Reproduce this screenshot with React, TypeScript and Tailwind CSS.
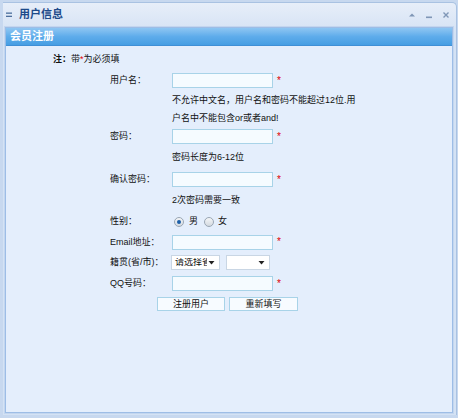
import React from "react";

const font = { fontFamily: '"Liberation Sans", "Noto Sans CJK SC", sans-serif' };

function Star() {
  return <span className="ml-[4px] text-[10px] leading-none text-[#e00000]">*</span>;
}

function TextBox() {
  return <div className="h-[15px] w-[101px] border border-[#a8d3e8] bg-[#f5fbff]" />;
}

function Row({ label, h, children }: { label?: string; h: number; children?: React.ReactNode }) {
  return (
    <div className="flex items-center" style={{ height: h }}>
      <div className="w-[62px] shrink-0 text-[9px] leading-none text-[#111]">{label}</div>
      <div className="flex items-center">{children}</div>
    </div>
  );
}

function Radio({ checked }: { checked?: boolean }) {
  return (
    <span className="flex h-[10px] w-[10px] items-center justify-center rounded-full border border-[#9aa6b4] bg-gradient-to-b from-[#f4f6f8] to-[#d3d9e0]">
      {checked && <span className="h-[4px] w-[4px] rounded-full bg-[#1c5fa8]" />}
    </span>
  );
}

function FakeSelect({ w, text }: { w: number; text?: string }) {
  return (
    <div className="flex h-[15px] items-center overflow-hidden border border-[#c9d6e4] bg-white" style={{ width: w }}>
      <div className="min-w-0 flex-1 overflow-hidden whitespace-nowrap pl-[3px] text-[9px] leading-none text-[#111]">{text}</div>
      <svg width="9" height="9" viewBox="0 0 9 9" className="mr-[3px] shrink-0">
        <path d="M1.5 3 L7.5 3 L4.5 6.5 Z" fill="#222" />
      </svg>
    </div>
  );
}

export default function App() {
  return (
    <div className="relative h-[418px] w-[458px] overflow-hidden bg-[#c7d8ef]" style={font}>
      {/* window */}
      <div className="ml-[3px] mt-[2px] h-[413px] w-[454px] rounded-tr-[5px] border-t border-r border-[#a9c2e2] bg-gradient-to-b from-[#e7eef9] to-[#d4e2f4] to-[30px]">
        {/* title bar */}
        <div className="flex h-[23px] items-center">
          <svg width="8" height="6" viewBox="0 0 8 6" className="ml-[3px]">
            <rect x="0" y="0.5" width="6" height="1.3" fill="#4d6f9c" />
            <rect x="0" y="3.7" width="6" height="1.3" fill="#4d6f9c" />
          </svg>
          <span className="ml-[5px] text-[11px] font-bold leading-none text-[#1d4a8a]">用户信息</span>
          <div className="ml-auto mr-[6px] flex items-center gap-[9px]">
            <svg width="8" height="8" viewBox="0 0 8 8">
              <path d="M1 5.5 L4 2.5 L7 5.5 Z" fill="#7f96b6" />
            </svg>
            <svg width="8" height="8" viewBox="0 0 8 8">
              <rect x="1" y="5.5" width="6" height="1.6" fill="#7f96b6" />
            </svg>
            <svg width="8" height="8" viewBox="0 0 8 8">
              <path d="M1.5 1.5 L6.5 6.5 M6.5 1.5 L1.5 6.5" stroke="#7f96b6" strokeWidth="1.4" />
            </svg>
          </div>
        </div>
        {/* panel */}
        <div className="ml-[2px] mt-[1px] flex h-[386px] w-[448px] flex-col border border-[#9dbde6] bg-[#e4eefc] shadow-[0_0_0_1px_#c3d6ef]">
          <div className="flex h-[18px] items-center border-b border-[#3f8fd6] bg-gradient-to-b from-[#8ec6f2] via-[#5eaceb] to-[#469ee3] pl-[4px]">
            <span className="text-[11px] font-bold leading-none text-white">会员注册</span>
          </div>
          <div className="flex-1 pt-[3px]">
            <div className="flex h-[20px] items-center pl-[47px] text-[9px] leading-none text-[#111]">
              <span className="font-bold">注：</span>
              <span>带</span>
              <span className="text-[#e00000]">*</span>
              <span>为必须填</span>
            </div>
            <div className="mt-[1px] pl-[104px]">
              <Row label="用户名：" h={21}>
                <TextBox />
                <Star />
              </Row>
              <div className="ml-[62px] whitespace-nowrap text-[9px] leading-[18px] text-[#111]" style={{ height: 36 }}>
                不允许中文名，用户名和密码不能超过12位.用
                <br />
                户名中不能包含or或者and!
              </div>
              <Row label="密码：" h={19}>
                <TextBox />
                <Star />
              </Row>
              <Row h={23}>
                <span className="text-[9px] leading-none text-[#111]">密码长度为6-12位</span>
              </Row>
              <Row label="确认密码：" h={21}>
                <TextBox />
                <Star />
              </Row>
              <Row h={21}>
                <span className="text-[9px] leading-none text-[#111]">2次密码需要一致</span>
              </Row>
              <Row label="性别：" h={21}>
                <div className="flex items-center pl-[2px] text-[9px] leading-none text-[#111]">
                  <Radio checked />
                  <span className="ml-[5px]">男</span>
                  <span className="ml-[6px]">
                    <Radio />
                  </span>
                  <span className="ml-[4px]">女</span>
                </div>
              </Row>
              <Row label="Email地址：" h={20}>
                <TextBox />
                <Star />
              </Row>
              <Row label="籍贯(省/市)：" h={21}>
                <div className="-ml-[1px] flex items-center gap-[6px]">
                  <FakeSelect w={49} text="请选择省份" />
                  <FakeSelect w={44} />
                </div>
              </Row>
              <Row label="QQ号码：" h={21}>
                <TextBox />
                <Star />
              </Row>
              <div className="flex h-[20px] items-center gap-[4px] pl-[47px]">
                <button className="h-[14px] w-[68px] border border-[#a8d3e8] bg-[#f7fbff] text-[9px] leading-none text-[#111]">
                  注册用户
                </button>
                <button className="h-[14px] w-[69px] border border-[#a8d3e8] bg-[#f7fbff] text-[9px] leading-none text-[#111]">
                  重新填写
                </button>
              </div>
            </div>
          </div>
        </div>
      </div>
    </div>
  );
}
